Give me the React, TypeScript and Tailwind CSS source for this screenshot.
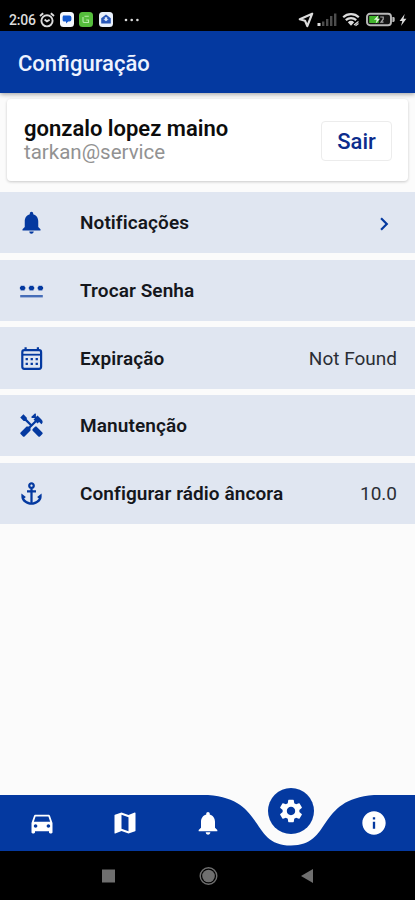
import type { ComponentType, ReactNode } from "react";
import {
  MdAnchor,
  MdChevronRight,
  MdDirectionsCar,
  MdHandyman,
  MdInfo,
  MdMap,
  MdNotifications,
  MdSettings,
} from "react-icons/md";

interface IconProps {
  className?: string;
}

interface SettingRow {
  icon: ComponentType<IconProps>;
  label: string;
  value?: ReactNode;
}

function PasswordIcon({ className }: IconProps) {
  return (
    <svg className={className} viewBox="0 0 27 27" fill="currentColor">
      <path d="M2.2 18h22.6v2.4H2.2z" opacity="0.7" />
      {[4.6, 13.5, 22.4].map((x) => (
        <g key={x}>
          <rect x={x - 2} y="8.8" width="4" height="4.6" />
          <rect x={x - 2.7} y="10" width="5.4" height="2.2" />
        </g>
      ))}
    </svg>
  );
}

function CalendarIcon({ className }: IconProps) {
  return (
    <svg className={className} viewBox="0 0 27 27" fill="currentColor">
      <path d="M6.5 2.3h2.2v3H6.5zM18.8 2.3H21v3h-2.2z" />
      <rect x="4.3" y="5.2" width="18.8" height="18.6" rx="2" fill="none" stroke="currentColor" strokeWidth="2.2" />
      <path d="M4 8.8h19.4v1.8H4z" />
      <path d="M7.6 13h2.3v2.2H7.6zM12.6 13h2.3v2.2h-2.3zM17.6 13h2.3v2.2h-2.3zM7.6 17.8h2.3V20H7.6zM12.6 17.8h2.3V20h-2.3zM17.6 17.8h2.3V20h-2.3z" />
    </svg>
  );
}

const rows: SettingRow[] = [
  {
    icon: MdNotifications,
    label: "Notificações",
    value: <MdChevronRight className="h-[26px] w-[26px] text-[#0439a0]" />,
  },
  { icon: PasswordIcon, label: "Trocar Senha" },
  { icon: CalendarIcon, label: "Expiração", value: "Not Found" },
  { icon: MdHandyman, label: "Manutenção" },
  { icon: MdAnchor, label: "Configurar rádio âncora", value: "10.0" },
];

function StatusBar() {
  return (
    <div className="flex h-[31px] shrink-0 items-center bg-black pt-2 pl-[9px] pr-2 text-[#dcdcdc]">
      <span className="w-[28px] text-[14px] font-medium leading-4 tracking-[-0.2px]">2:06</span>
      <svg className="ml-0.5 h-4 w-4" viewBox="0 0 16 16" fill="none" stroke="currentColor" strokeWidth="1.9">
        <circle cx="8" cy="8.8" r="5.6" />
        <path d="M5.6 7.4 8 9.4l2.6-1.6M1 4l3.2-2.8M15 4l-3.2-2.8" />
      </svg>
      <svg className="ml-[5px] h-[15px] w-[14px]" viewBox="0 0 14 15">
        <rect width="14" height="15" rx="3.5" fill="#f4f7fc" />
        <path d="M3.2 3.5h6.2a2 2 0 0 1 2 2v2a2 2 0 0 1-2 2H8.2L6 11.6V9.5H4.2a1.6 1.6 0 0 1-1.6-1.6V5z" fill="#1259d0" />
      </svg>
      <svg className="ml-[5px] h-[15px] w-[14px]" viewBox="0 0 14 15">
        <rect width="14" height="15" rx="3.5" fill="#55bd3c" />
        <path d="M4 5v4.2c0 1 .6 1.3 1.4 1.3h4.1V8H7.2M5.5 4.3h4.3M7 6.3h.1" fill="none" stroke="#b9eca9" strokeWidth="1.1" />
      </svg>
      <svg className="ml-[6px] h-[15px] w-[14px]" viewBox="0 0 14 15">
        <rect width="14" height="15" rx="3.5" fill="#e9f0fb" />
        <path d="M2.2 6.3 7 2.5l4.8 3.8v5.2H2.2z" fill="#2857b8" />
        <path d="M5.8 5.2h2.4v2h1.5L7 9.3 4.3 7.2h1.5z" fill="#dce8fb" />
      </svg>
      <svg className="ml-[11px] h-1 w-4" viewBox="0 0 16 4" fill="currentColor">
        <circle cx="2" cy="2" r="1.3" />
        <circle cx="7.7" cy="2" r="1.3" />
        <circle cx="13.4" cy="2" r="1.3" />
      </svg>

      <svg className="ml-auto h-4 w-4" viewBox="0 0 16 16" fill="none" stroke="currentColor" strokeWidth="2.2" strokeLinejoin="round">
        <path d="M14.2 1.7 1.8 7.2l5.2 1.5 2.3 5.5z" />
      </svg>
      <svg className="ml-[3px] h-[15px] w-[21px]" viewBox="0 0 21 15">
        <rect x="0.5" y="11" width="3" height="3" fill="#dcdcdc" />
        <path d="M5 9.5h2.4V14H5zM9 7h2.4v7H9zM13 4h2.4v10H13zM17 1.5h2.4V14H17z" fill="#4d4d4d" />
      </svg>
      <svg className="ml-1 h-[15px] w-[18px]" viewBox="0 0 18 15" fill="none" stroke="currentColor">
        <path d="M1.2 5.2a11.2 11.2 0 0 1 15.6 0M3.8 8.1a7.6 7.6 0 0 1 10.4 0" strokeWidth="2.2" />
        <path d="M5.8 10.2a4.7 4.7 0 0 1 6.4 0L9 13.8z" fill="currentColor" stroke="none" />
        <path d="m12 13 4.5-3.5M13.5 13.8l3-2.2" strokeWidth="1.2" />
      </svg>
      <svg className="ml-[6px] h-[15px] w-[29px]" viewBox="0 0 29 15">
        <rect x="1" y="1.7" width="24" height="11.6" rx="3" fill="#151515" stroke="#b9b9b9" strokeWidth="1.9" />
        <path d="M26.4 5h1.1q1.2 0 1.2 1.4v2.2q0 1.4-1.2 1.4h-1.1z" fill="#b9b9b9" />
        <path d="M3.2 4h9.5v7H3.2z" fill="#40b52b" />
        <path d="m12.4 3.2-4.5 4.6h2.8l-1 3.8 4.4-4.8h-2.8z" fill="#e6f7e1" />
        <path d="M14.2 5h3v2.2l-2.2 3h2.5" fill="none" stroke="#aaa" strokeWidth="1.2" />
      </svg>
      <svg className="ml-1 h-[14px] w-2" viewBox="0 0 8 14" fill="currentColor">
        <path d="M5.7 1 .6 8h2.7L2 13l5.4-7.2H4.5z" />
      </svg>
    </div>
  );
}

function ProfileCard() {
  return (
    <div className="mx-[7px] mt-[6px] flex h-[82px] items-center justify-between rounded bg-white pl-[17px] pr-4 shadow-[0_1px_3px_rgba(0,0,0,0.2)]">
      <div className="pt-px">
        <p className="text-[22px] font-semibold leading-6 text-[#0c0c0c]">gonzalo lopez maino</p>
        <p className="text-[20.5px] leading-[23px] text-[#929292]">tarkan@service</p>
      </div>
      <button className="mt-px h-10 w-[71px] rounded-[4px] border border-[#ececec] pt-0.5 text-[22px] font-medium leading-none text-[#0b2c8c]">
        Sair
      </button>
    </div>
  );
}

function SettingItem({ icon: Icon, label, value }: SettingRow) {
  return (
    <li className="flex h-[61.3px] items-center bg-[#e0e6f1] pl-[18px] pr-[18px]">
      <Icon className="h-[27px] w-[27px] shrink-0 text-[#0439a0]" />
      <span className="ml-[35px] flex-1 pt-0.5 text-[19px] font-semibold tracking-[0.09px] text-[#15171c]">{label}</span>
      <span className="pt-0.5 text-[19px] text-[#2b2e35]">{value}</span>
    </li>
  );
}

function BottomNav() {
  const tabs = [MdDirectionsCar, MdMap, MdNotifications, MdSettings, MdInfo];
  const active = 3;
  return (
    <nav className="relative h-14 shrink-0">
      <svg className="absolute inset-0 h-14 w-full" viewBox="0 0 415 56" preserveAspectRatio="none">
        <path
          d="M0 0H208C266 4.2 249.5 50.5 291 50.5S316 4.2 374 0H415V56H0Z"
          fill="#0439a0"
        />
      </svg>
      <div className="relative grid h-full grid-cols-5 items-center justify-items-center text-white">
        {tabs.map((Tab, i) =>
          i === active ? (
            <span
              key={i}
              className="-mt-6 flex h-[46px] w-[46px] items-center justify-center rounded-full bg-[#0439a0]"
            >
              <Tab className="h-7 w-7" />
            </span>
          ) : (
            <Tab key={i} className="-mt-px h-7 w-7" />
          )
        )}
      </div>
    </nav>
  );
}

function SystemNav() {
  return (
    <div className="flex h-[49px] shrink-0 items-center justify-center bg-black">
      <svg className="h-5 w-[220px]" viewBox="0 0 220 20" fill="#6f6f6f">
        <rect x="4" y="3.5" width="13" height="13" />
        <circle cx="110.5" cy="10" r="8.3" fill="none" stroke="#6f6f6f" strokeWidth="1.4" />
        <circle cx="110.5" cy="10" r="6.3" />
        <path d="M215 3v14L203 10z" />
      </svg>
    </div>
  );
}

export default function App() {
  return (
    <div className="flex h-[900px] w-[415px] flex-col overflow-hidden bg-[#fbfbfb] font-['Roboto',sans-serif]">
      <StatusBar />
      <header className="z-10 flex h-[62px] shrink-0 items-center bg-[#0439a0] pl-[18px] shadow-[0_1px_5px_rgba(0,0,0,0.4)]">
        <h1 className="pt-0.5 text-[22px] font-medium text-[#eef3ff]">Configuração</h1>
      </header>
      <main className="flex-1">
        <ProfileCard />
        <ul className="mt-[11px] flex flex-col gap-[6.4px]">
          {rows.map((row) => (
            <SettingItem key={row.label} {...row} />
          ))}
        </ul>
      </main>
      <BottomNav />
      <SystemNav />
    </div>
  );
}
